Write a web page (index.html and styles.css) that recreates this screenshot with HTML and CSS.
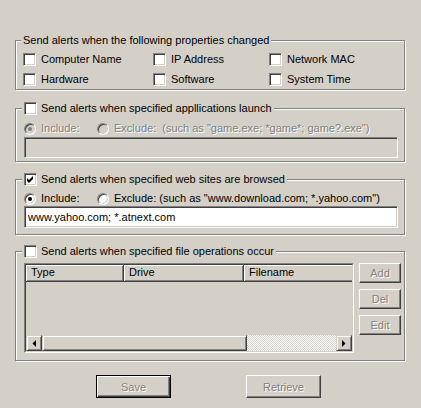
FILE: index.html
```html
<!DOCTYPE html>
<html lang="en">
<head>
  <meta charset="UTF-8" />
  <title>Alert Settings</title>
  <link rel="stylesheet" href="styles.css">
</head>
<body>

<div class="dialog">

  <div class="group">
    <div class="legend legend-text">Send alerts when the following properties changed</div>
    <div class="props">
      <label class="opt"><span class="check"></span>Computer Name</label>
      <label class="opt"><span class="check"></span>IP Address</label>
      <label class="opt"><span class="check"></span>Network MAC</label>
      <label class="opt"><span class="check"></span>Hardware</label>
      <label class="opt"><span class="check"></span>Software</label>
      <label class="opt"><span class="check"></span>System Time</label>
    </div>
  </div>

  <div class="group group-apps">
    <div class="legend"><span class="check"></span>Send alerts when specified appllications launch</div>
    <div class="radios disabled">
      <span class="opt opt-first"><span class="radio on"></span>Include:</span>
      <span class="opt"><span class="radio"></span>Exclude:&nbsp;&nbsp;(such as "game.exe; *game*; game?.exe")</span>
    </div>
    <div class="edit edit-off"></div>
  </div>

  <div class="group group-web">
    <div class="legend">
      <span class="check">
        <svg width="7" height="7" viewBox="0 0 7 7"><path d="M0 2 L2 4 L6 0 L6 3 L2 7 L0 5 Z" fill="#000"/></svg>
      </span>Send alerts when specified web sites are browsed
    </div>
    <div class="radios">
      <span class="opt opt-first"><span class="radio on"></span>Include:</span>
      <span class="opt"><span class="radio"></span>Exclude: (such as "www.download.com; *.yahoo.com")</span>
    </div>
    <div class="edit">www.yahoo.com; *.atnext.com</div>
  </div>

  <div class="group group-files">
    <div class="legend"><span class="check"></span>Send alerts when specified file operations occur</div>
    <div class="files">
      <div class="lv">
        <div class="lv-in">
          <div class="lv-head">
            <div class="col col-type">Type</div>
            <div class="col col-drive">Drive</div>
            <div class="col col-name">Filename</div>
          </div>
          <div class="lv-body"></div>
          <div class="sb">
            <div class="sb-btn">
              <svg width="4" height="7" viewBox="0 0 4 7"><path d="M4 0 L4 7 L0.5 3.5 Z" fill="#000"/></svg>
            </div>
            <div class="sb-thumb"></div>
            <div class="sb-track"></div>
            <div class="sb-btn">
              <svg width="4" height="7" viewBox="0 0 4 7"><path d="M0 0 L0 7 L3.5 3.5 Z" fill="#000"/></svg>
            </div>
          </div>
        </div>
      </div>
      <div class="side">
        <div class="btn btn-side">Add</div>
        <div class="btn btn-side">Del</div>
        <div class="btn btn-side">Edit</div>
      </div>
    </div>
  </div>

  <div class="actions">
    <div class="btn btn-main btn-default">Save</div>
    <div class="btn btn-main">Retrieve</div>
  </div>

</div>

</body>
</html>
```

FILE: styles.css
```css
* {
  box-sizing: border-box;
}

body {
  margin: 0;
  background: #d4d0c8;
  font-family: 'Liberation Sans', Arial, sans-serif;
  font-size: 11px;
  color: #000;
}

.dialog {
  width: 421px;
  height: 408px;
  padding: 40px 16px 0 15px;
}

/* etched group frame */
.group {
  border: 1px solid #808080;
  box-shadow: inset 1px 1px 0 #fff, 1px 1px 0 #fff;
  padding: 0 6px 3px 8px;
}

.group-apps {
  margin-top: 18px;
}

.group-web {
  margin-top: 17px;
  padding-bottom: 6px;
}

.group-files {
  margin-top: 16px;
  padding-bottom: 7px;
}

.legend {
  display: flex;
  align-items: center;
  gap: 4px;
  width: max-content;
  height: 13px;
  line-height: 13px;
  margin: -7px 0 0 -2px;
  padding: 0 2px;
  background: #d4d0c8;
  white-space: nowrap;
}

.legend-text {
  margin-left: -3px;
}

.props {
  display: grid;
  grid-template-columns: 130px 116px auto;
  row-gap: 7px;
  margin-top: 6px;
  margin-left: -1px;
}

.opt {
  display: flex;
  align-items: center;
  gap: 5px;
  height: 13px;
  line-height: 13px;
  white-space: nowrap;
}

.check {
  display: flex;
  align-items: center;
  justify-content: center;
  width: 13px;
  height: 13px;
  flex: none;
  background: #fff;
  border: 1px solid;
  border-color: #808080 #fff #fff #808080;
  box-shadow: inset 1px 1px 0 #404040, inset -1px -1px 0 #d4d0c8;
}

.radios {
  display: flex;
  align-items: center;
  height: 13px;
  margin-top: 7px;
}

.group-web .radios {
  margin-top: 6px;
}

.opt-first {
  width: 73px;
}

.radio {
  position: relative;
  width: 12px;
  height: 12px;
  flex: none;
  border-radius: 50%;
  background: #fff;
  border: 1px solid;
  border-color: #808080 #fff #fff #808080;
  box-shadow: inset 1px 1px 0 #404040, inset -1px -1px 0 #d4d0c8;
}

.radio.on::after {
  content: "";
  position: absolute;
  left: 3px;
  top: 3px;
  width: 4px;
  height: 4px;
  border-radius: 50%;
  background: #000;
}

.disabled {
  color: #808080;
  text-shadow: 1px 1px 0 #fff;
}

.disabled .radio {
  background: #d4d0c8;
}

.disabled .radio.on::after {
  background: #808080;
}

.edit {
  height: 22px;
  margin-top: 1px;
  padding: 0 3px;
  line-height: 20px;
  background: #fff;
  border: 1px solid;
  border-color: #808080 #fff #fff #808080;
  box-shadow: inset 1px 1px 0 #404040, inset -1px -1px 0 #d4d0c8;
}

.edit-off {
  height: 21px;
  margin-top: 2px;
  background: #d4d0c8;
}

/* file list */
.files {
  display: flex;
  gap: 5px;
  margin-top: 5px;
}

.lv {
  width: 330px;
  height: 90px;
  display: flex;
  border: 1px solid;
  border-color: #808080 #fff #fff #808080;
}

.lv-in {
  flex: 1;
  display: flex;
  flex-direction: column;
  overflow: hidden;
  border: 1px solid;
  border-color: #404040 #d4d0c8 #d4d0c8 #404040;
}

.lv-head {
  display: flex;
  height: 17px;
  flex: none;
}

.col {
  flex: none;
  height: 17px;
  line-height: 15px;
  padding-left: 5px;
  border-right: 1px solid #404040;
  border-bottom: 1px solid #404040;
  box-shadow: inset 1px 1px 0 #fff, inset -1px -1px 0 #808080;
  white-space: nowrap;
}

.col-type {
  width: 98px;
}

.col-drive {
  width: 120px;
}

.col-name {
  width: 140px;
}

.lv-body {
  flex: 1;
}

.sb {
  display: flex;
  height: 16px;
  flex: none;
}

.sb-btn,
.sb-thumb {
  flex: none;
  border: 1px solid;
  border-color: #d4d0c8 #404040 #404040 #d4d0c8;
  box-shadow: inset 1px 1px 0 #fff, inset -1px -1px 0 #808080;
  background: #d4d0c8;
}

.sb-btn {
  width: 16px;
  display: flex;
  align-items: center;
  justify-content: center;
}

.sb-thumb {
  width: 205px;
}

.sb-track {
  flex: 1;
  background: repeating-conic-gradient(#fff 0 25%, #d4d0c8 0 50%) 0 0 / 2px 2px;
}

.side {
  display: flex;
  flex-direction: column;
  gap: 6px;
}

/* push buttons */
.btn {
  display: flex;
  align-items: center;
  justify-content: center;
  color: #808080;
  text-shadow: 1px 1px 0 #fff;
  border: 1px solid;
  border-color: #fff #404040 #404040 #fff;
  box-shadow: inset -1px -1px 0 #808080;
}

.btn-side {
  width: 42px;
  height: 20px;
}

.actions {
  display: flex;
  gap: 75px;
  margin-top: 14px;
  padding-left: 81px;
}

.btn-main {
  width: 75px;
  height: 23px;
}

.btn-default {
  border-color: #000;
  box-shadow: inset 1px 1px 0 #fff, inset -1px -1px 0 #404040, inset -2px -2px 0 #808080;
}
```
